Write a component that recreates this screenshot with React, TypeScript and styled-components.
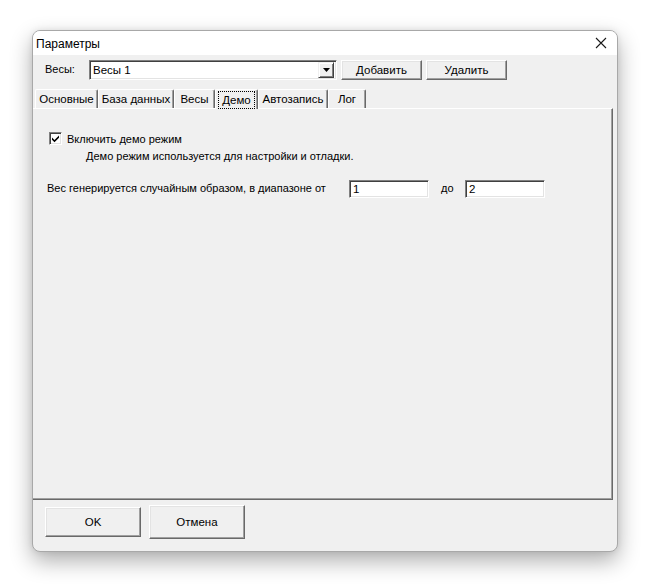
import styled, { createGlobalStyle } from 'styled-components';

const GlobalStyle = createGlobalStyle`
  html, body {
    margin: 0;
    padding: 0;
    background: #ffffff;
  }
  body {
    font-family: "Liberation Sans", Arial, sans-serif;
    font-size: 11px;
    color: #000;
  }
`;

const TABS = [
  { key: 'main', title: 'Основные', width: 63 },
  { key: 'db', title: 'База данных', width: 76 },
  { key: 'scales', title: 'Весы', width: 41 },
  { key: 'demo', title: 'Демо', width: 43 },
  { key: 'auto', title: 'Автозапись', width: 70 },
  { key: 'log', title: 'Лог', width: 38 }
];

export default function App() {
  return (
    <>
      <GlobalStyle />
      <Page>
        <Window>
          <TitleBar>
            <Title>Параметры</Title>
            <CloseButton aria-label="Закрыть">
              <svg width="12" height="12" viewBox="0 0 12 12">
                <path d="M1 1 L11 11 M11 1 L1 11" stroke="#1a1a1a" strokeWidth="1.1" fill="none" />
              </svg>
            </CloseButton>
          </TitleBar>

          <Client>
            <ScaleRow>
              <FieldLabel>Весы:</FieldLabel>
              <Combo>
                <ComboText>Весы 1</ComboText>
                <ComboArrow>
                  <svg width="7" height="4" viewBox="0 0 7 4">
                    <path d="M0 0 H7 L3.5 4 Z" fill="#000" />
                  </svg>
                </ComboArrow>
              </Combo>
              <Button $w={81} $h={20}>Добавить</Button>
              <Button $w={81} $h={20}>Удалить</Button>
            </ScaleRow>

            <TabStrip>
              {TABS.map(tab => (
                <Tab key={tab.key} $w={tab.width} $active={tab.key === 'demo'}>
                  {tab.key === 'demo' ? <Focus>{tab.title}</Focus> : tab.title}
                </Tab>
              ))}
            </TabStrip>

            <Panel>
              <CheckRow>
                <CheckBox>
                  <svg width="9" height="9" viewBox="0 0 9 9">
                    <path d="M1 3.5 L3.5 6 L8 1.5 L8 3.8 L3.5 8.2 L1 5.8 Z" fill="#000" />
                  </svg>
                </CheckBox>
                <span>Включить демо режим</span>
              </CheckRow>
              <Hint>Демо режим используется для настройки и отладки.</Hint>

              <RangeRow>
                <RangeLabel>Вес генерируется случайным образом, в диапазоне от</RangeLabel>
                <Input>1</Input>
                <ToLabel>до</ToLabel>
                <Input>2</Input>
              </RangeRow>
            </Panel>

            <Footer>
              <Button $w={96} $h={30}>OK</Button>
              <Button $w={96} $h={34}>Отмена</Button>
            </Footer>
          </Client>
        </Window>
      </Page>
    </>
  );
}

const Page = styled.div`
  padding: 30px 0 0 32px;
  height: 585px;
  box-sizing: border-box;
`;

const Window = styled.div`
  width: 586px;
  height: 522px;
  box-sizing: border-box;
  border: 1px solid #a8a8a8;
  border-radius: 8px;
  overflow: hidden;
  background: #f0f0f0;
  box-shadow: 0 9px 22px rgba(0, 0, 0, 0.32), 0 0 6px rgba(0, 0, 0, 0.08);
  display: flex;
  flex-direction: column;
  white-space: nowrap;
`;

const TitleBar = styled.div`
  height: 24px;
  background: #ffffff;
  display: flex;
  align-items: center;
  justify-content: space-between;
  padding-left: 3px;
`;

const Title = styled.span`
  font-size: 12px;
  color: #000;
  margin-top: 1px;
`;

const CloseButton = styled.div`
  width: 30px;
  height: 24px;
  display: flex;
  align-items: center;
  justify-content: center;
  margin-right: 1px;
`;

const Client = styled.div`
  flex: 1;
  display: flex;
  flex-direction: column;
`;

const ScaleRow = styled.div`
  display: flex;
  align-items: center;
  gap: 4px;
  margin-top: 5px;
  height: 20px;
  padding-left: 12px;
`;

const FieldLabel = styled.span`
  width: 40px;
  margin-bottom: 3px;
`;

const Combo = styled.div`
  width: 248px;
  height: 20px;
  box-sizing: border-box;
  border-top: 1px solid #808080;
  border-left: 1px solid #808080;
  border-right: 1px solid #ffffff;
  border-bottom: 1px solid #ffffff;
  box-shadow: inset 1px 1px 0 #404040, inset -1px -1px 0 #e3e3e3;
  background: #fff;
  display: flex;
  align-items: center;
  justify-content: space-between;
  padding: 2px;
`;

const ComboText = styled.span`
  padding-left: 1px;
  font-size: 11.5px;
`;

const ComboArrow = styled.div`
  width: 16px;
  height: 16px;
  box-sizing: border-box;
  background: #f0f0f0;
  border-top: 1px solid #f0f0f0;
  border-left: 1px solid #f0f0f0;
  border-right: 1px solid #404040;
  border-bottom: 1px solid #404040;
  box-shadow: inset 1px 1px 0 #ffffff, inset -1px -1px 0 #808080;
  display: flex;
  align-items: center;
  justify-content: center;
`;

const Button = styled.div<{ $w: number; $h: number }>`
  width: ${p => p.$w}px;
  height: ${p => p.$h}px;
  box-sizing: border-box;
  background: #f0f0f0;
  border-top: 1px solid #ffffff;
  border-left: 1px solid #ffffff;
  border-right: 1px solid #696969;
  border-bottom: 1px solid #696969;
  box-shadow: inset -1px -1px 0 #a0a0a0, inset 1px 1px 0 #e3e3e3;
  display: flex;
  align-items: center;
  justify-content: center;
  font-size: 11.5px;
`;

const TabStrip = styled.div`
  display: flex;
  align-items: flex-end;
  margin-top: 9px;
  padding-left: 2px;
  height: 19px;
`;

const Tab = styled.div<{ $w: number; $active: boolean }>`
  width: ${p => p.$w}px;
  height: ${p => (p.$active ? 20 : 19)}px;
  box-sizing: border-box;
  border-top: 1px solid #ffffff;
  border-left: 1px solid #ffffff;
  border-right: 1px solid #696969;
  box-shadow: inset -1px 0 0 #a0a0a0;
  border-radius: 2px 2px 0 0;
  display: flex;
  align-items: center;
  justify-content: center;
  font-size: 11.5px;
  margin-bottom: ${p => (p.$active ? -1 : 0)}px;
  background: #f0f0f0;
  position: relative;
  z-index: ${p => (p.$active ? 1 : 0)};
`;

const Focus = styled.span`
  outline: 1px dotted #000;
  outline-offset: 0;
  padding: 1px 3px;
  line-height: 14px;
`;

const Panel = styled.div`
  width: 580px;
  height: 392px;
  box-sizing: border-box;
  border-top: 1px solid #ffffff;
  border-right: 1px solid #696969;
  border-bottom: 1px solid #696969;
  box-shadow: inset -1px -1px 0 #a0a0a0;
  display: flex;
  flex-direction: column;
  padding: 23px 0 0 16px;
`;

const CheckRow = styled.div`
  display: flex;
  align-items: center;
  gap: 5px;
  height: 13px;
  font-size: 11px;
`;

const CheckBox = styled.div`
  width: 13px;
  height: 13px;
  box-sizing: border-box;
  border-top: 1px solid #808080;
  border-left: 1px solid #808080;
  border-right: 1px solid #ffffff;
  border-bottom: 1px solid #ffffff;
  box-shadow: inset 1px 1px 0 #404040, inset -1px -1px 0 #e3e3e3;
  background: #fff;
  display: flex;
  align-items: center;
  justify-content: center;
`;

const Hint = styled.div`
  margin: 4px 0 0 37px;
  font-size: 11px;
  line-height: 14px;
`;

const RangeRow = styled.div`
  display: flex;
  align-items: center;
  margin-top: 17px;
  margin-left: -2px;
  height: 18px;
  font-size: 11px;
`;

const RangeLabel = styled.span`
  width: 302px;
  margin-bottom: 2px;
`;

const ToLabel = styled.span`
  width: 36px;
  padding-left: 12px;
  box-sizing: border-box;
  margin-bottom: 3px;
`;

const Input = styled.div`
  width: 80px;
  height: 18px;
  box-sizing: border-box;
  border-top: 1px solid #808080;
  border-left: 1px solid #808080;
  border-right: 1px solid #ffffff;
  border-bottom: 1px solid #ffffff;
  box-shadow: inset 1px 1px 0 #404040, inset -1px -1px 0 #e3e3e3;
  background: #fff;
  padding: 1px 0 0 3px;
  font-size: 11.5px;
  line-height: 15px;
`;

const Footer = styled.div`
  display: flex;
  align-items: center;
  gap: 8px;
  padding-left: 12px;
  margin-top: 5px;
  height: 34px;
`;
